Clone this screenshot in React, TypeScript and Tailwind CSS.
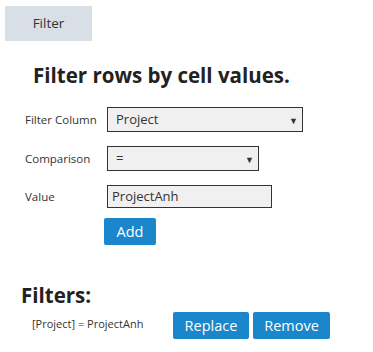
export default function App() {
  return (
    <div className="min-h-[352px] w-[373px] bg-white text-[#333] font-['Open_Sans',sans-serif]">
      <div className="pl-[5px] pt-[6px]">
        <div className="flex h-[35px] w-[87px] items-center justify-center bg-[#d8dfe7] text-[13.5px] text-[#333]">
          Filter
        </div>
      </div>

      <h2 className="ml-[33px] mt-[20px] text-[20.5px] font-bold leading-[28px] text-[#222]">
        Filter rows by cell values.
      </h2>

      <div className="mt-[18px] flex flex-col pl-[25px] text-[11.5px]">
        <div className="flex items-center">
          <label className="w-[82px]">Filter Column</label>
          <div className="relative flex h-[25px] w-[196px] items-center border border-[#333] bg-[#f0f0f0] pl-[8px] text-[13px]">
            Project
            <span className="absolute right-[4px] top-[6px] text-[9px]">▼</span>
          </div>
        </div>
        <div className="mt-[14px] flex items-center">
          <label className="w-[82px]">Comparison</label>
          <div className="relative flex h-[25px] w-[152px] items-center border border-[#333] bg-[#f0f0f0] pl-[8px] text-[13px]">
            =
            <span className="absolute right-[4px] top-[6px] text-[9px]">▼</span>
          </div>
        </div>
        <div className="mt-[14px] flex items-center">
          <label className="w-[82px]">Value</label>
          <div className="flex h-[23px] w-[165px] items-center border border-[#333] bg-[#f0f0f0] pl-[4px] text-[13px]">
            ProjectAnh
          </div>
        </div>
        <div className="mt-[10px] pl-[79px]">
          <button className="h-[27px] w-[52px] rounded-[2px] bg-[#1a86cb] text-[14.5px] text-white">Add</button>
        </div>
      </div>

      <h2 className="ml-[21px] mt-[38px] text-[20.5px] font-bold leading-[24px] text-[#222]">Filters:</h2>

      <div className="mt-[5px] flex items-start">
        <div className="ml-[32px] mt-[4px] w-[141px] text-[11px]">[Project] = ProjectAnh</div>
        <div className="flex gap-[4px]">
          <button className="h-[27px] w-[76px] rounded-[2px] bg-[#1a86cb] text-[14.5px] text-white">Replace</button>
          <button className="h-[27px] w-[77px] rounded-[2px] bg-[#1a86cb] text-[14.5px] text-white">Remove</button>
        </div>
      </div>
    </div>
  );
}
